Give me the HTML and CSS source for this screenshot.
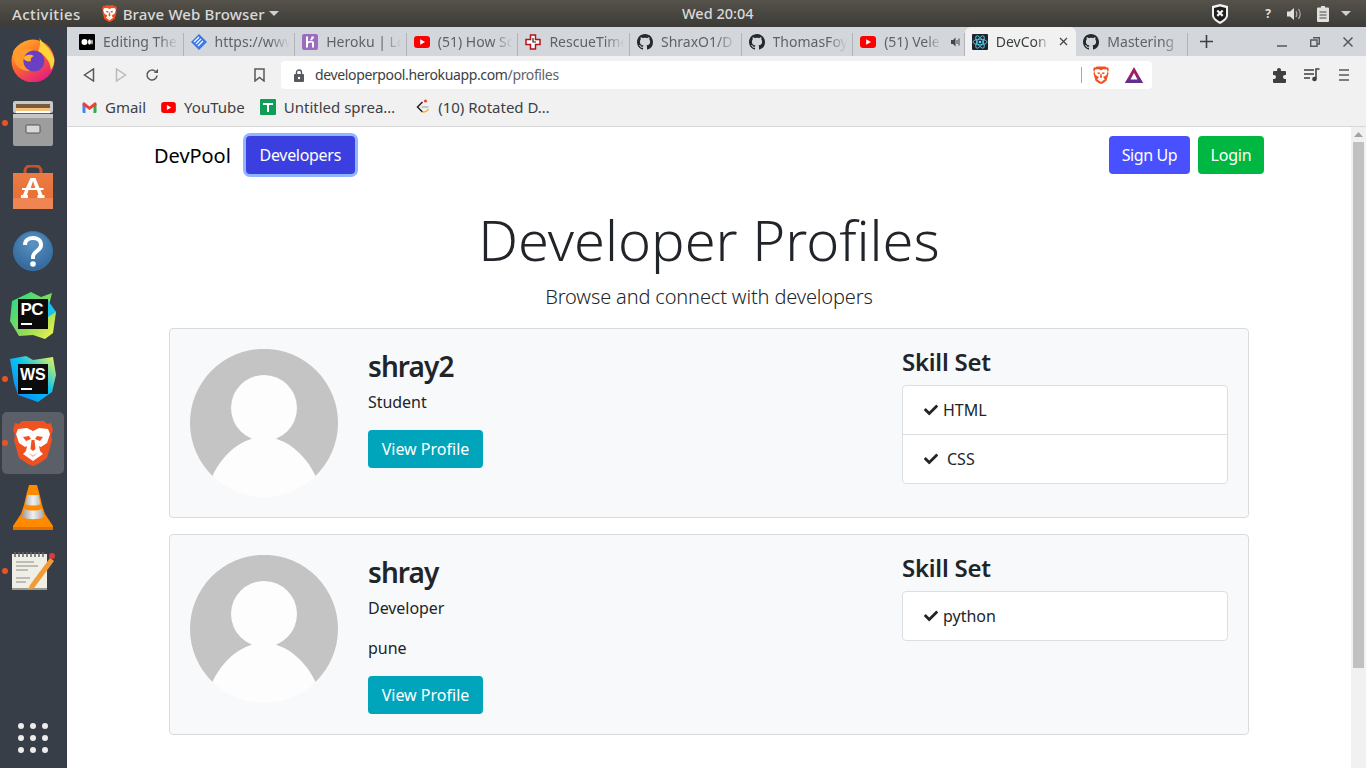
FILE: index.html
```html
<!DOCTYPE html>
<html lang="en">
<head>
<meta charset="utf-8">
<title>DevPool</title>
<link rel="stylesheet" href="styles.css">
</head>
<body>
<svg class="defs" width="0" height="0" aria-hidden="true">
  <defs>
    <symbol id="gh" viewBox="0 0 16 16"><path fill="#24292e" d="M8 0C3.58 0 0 3.58 0 8c0 3.54 2.29 6.53 5.47 7.59.4.07.55-.17.55-.38 0-.19-.01-.82-.01-1.49-2.01.37-2.53-.49-2.69-.94-.09-.23-.48-.94-.82-1.13-.28-.15-.68-.52-.01-.53.63-.01 1.08.58 1.23.82.72 1.21 1.87.87 2.33.66.07-.52.28-.87.51-1.07-1.78-.2-3.64-.89-3.64-3.95 0-.87.31-1.59.82-2.15-.08-.2-.36-1.02.08-2.12 0 0 .67-.21 2.2.82.64-.18 1.32-.27 2-.27.68 0 1.36.09 2 .27 1.53-1.04 2.2-.82 2.2-.82.44 1.1.16 1.92.08 2.12.51.56.82 1.27.82 2.15 0 3.07-1.87 3.75-3.65 3.95.29.25.54.73.54 1.48 0 1.07-.01 1.93-.01 2.2 0 .21.15.46.55.38A8.013 8.013 0 0016 8c0-4.42-3.58-8-8-8z"/></symbol>
    <symbol id="yt" viewBox="0 0 16 12"><rect width="16" height="12" rx="3" fill="#f00"/><path fill="#fff" d="M6.2 3.2 11 6l-4.8 2.8z"/></symbol>
    <symbol id="lion" viewBox="0 0 40 46"><path fill="#f1501f" d="M9 1h22l3 3 4-1 2 7-2 5 1 5-5 18-9 6-5 2-5-2-9-6-5-18 1-5-2-5 2-7 4 1z"/><path fill="#fff" d="M5 9l9-1 6 3 6-3 9 1 2 5-3 9-6 4-2-1 1 5 3 3-10 7-10-7 3-3 1-5-2 1-6-4-3-9z"/><path fill="#f1501f" d="M10 17l6-1 2 3-5 2zM30 17l-6-1-2 3 5 2zM18.500 20h3l1 9-2.500 2-2.500-2z"/><path fill="#f1501f" d="M15 33l5 2 5-2-5 4z" opacity=".4"/></symbol>
    <symbol id="check" viewBox="0 0 512 512"><path fill="#212529" d="M173.898 439.404l-166.4-166.4c-9.997-9.997-9.997-26.206 0-36.204l36.203-36.204c9.997-9.998 26.207-9.998 36.204 0L192 312.69 432.095 72.596c9.997-9.997 26.207-9.997 36.204 0l36.203 36.204c9.997 9.997 9.997 26.206 0 36.204l-294.4 294.401c-9.998 9.997-26.207 9.997-36.204-.001z"/></symbol>
    <symbol id="avatar" viewBox="0 0 148 148"><circle cx="74" cy="74" r="74" fill="#fdfdfd"/><path fill="#c4c4c4" d="M22.500 127A74 74 0 1 1 125.500 127C116 106 96 88 74 88S32 106 22.500 127z"/><circle cx="74" cy="59" r="33" fill="#fdfdfd"/></symbol>
    <linearGradient id="pcg" x1="0" y1="0" x2="1" y2="1"><stop offset="0" stop-color="#1ddb8b"/><stop offset=".55" stop-color="#8cd85a"/><stop offset="1" stop-color="#fcf84a"/></linearGradient>
    <linearGradient id="wsg" x1="0" y1="1" x2="1" y2="0"><stop offset="0" stop-color="#087cfa"/><stop offset=".55" stop-color="#07c3f2"/><stop offset="1" stop-color="#fcf84a"/></linearGradient>
    <linearGradient id="ffg" x1="0" y1="0" x2=".6" y2="1"><stop offset="0" stop-color="#ffc22b"/><stop offset=".5" stop-color="#ff6a2b"/><stop offset="1" stop-color="#e5217a"/></linearGradient>
    <linearGradient id="bagg" x1="0" y1="0" x2="0" y2="1"><stop offset="0" stop-color="#ea7c45"/><stop offset="1" stop-color="#e96b2e"/></linearGradient>
    <linearGradient id="stripeg" x1="0" y1="0" x2="1" y2="0"><stop offset="0" stop-color="#9a9a9a"/><stop offset=".5" stop-color="#f0f0f0"/><stop offset="1" stop-color="#a8a8a8"/></linearGradient>
    <radialGradient id="helpg" cx=".5" cy=".3" r=".75"><stop offset="0" stop-color="#5a93c4"/><stop offset="1" stop-color="#2f6497"/></radialGradient>
  </defs>
</svg>

<header class="topbar">
  <span class="top-item activities">Activities</span>
  <span class="top-item appmenu">
    <svg class="top-lion" width="15" height="17"><use href="#lion"/></svg>
    Brave Web Browser
    <svg class="caret" width="10" height="5" viewBox="0 0 10 5"><path fill="#cfcfcf" d="M0 0h10L5 5z"/></svg>
  </span>
  <span class="clock">Wed 20:04</span>
  <span class="tray">
    <svg width="18" height="20" viewBox="0 0 18 20"><path fill="#f2f2f2" d="M1 2l8-2 8 2v9c0 4-4 7-8 9-4-2-8-5-8-9z"/><path fill="#1d1d1d" d="M3 4l6-1.500L15 4v7c0 3-3 5-6 6.500C6 16 3 14 3 11z"/><path d="M6.300 6.500l5.400 5.400M11.700 6.500l-5.400 5.400" stroke="#f2f2f2" stroke-width="2.200"/></svg>
    <span class="tray-q">?</span>
    <svg width="16" height="16" viewBox="0 0 16 16"><path fill="#e0e0e0" d="M1 5.500h3L8 2v12l-4-3.500H1z"/><path d="M10 5c1 1.800 1 4.200 0 6M12.500 3c2 3 2 7 0 10" fill="none" stroke="#a8a8a8" stroke-width="1.300"/></svg>
    <svg width="12" height="16" viewBox="0 0 12 16"><path fill="#e0e0e0" d="M4 0h4v1.500h3a1 1 0 0 1 1 1V15a1 1 0 0 1-1 1H1a1 1 0 0 1-1-1V2.500a1 1 0 0 1 1-1h3z"/><path d="M2.500 6h7M2.500 9h7M2.500 12h7" stroke="#4a4843" stroke-width="1.200"/></svg>
    <svg class="tray-caret" width="10" height="5" viewBox="0 0 10 5"><path fill="#cfcfcf" d="M0 0h10L5 5z"/></svg>
  </span>
</header>

<div class="desktop">
  <nav class="dock">
    <div class="dock-item">
      <svg width="46" height="46" viewBox="0 0 46 46"><circle cx="23" cy="25" r="21.500" fill="url(#ffg)"/><path fill="#ffd53a" d="M29 1c2 6 12 10 15 21 1 4-1 9-3 12-1-9-6-15-13-19C30 11 31 6 29 1z"/><path fill="#ff9a2b" d="M3 16c2-4 5-7 8-7-1 3 0 4 1 5 3-2 8-2 11 0-5 1-10 5-10 11 0 5 4 9 10 9-8 3-17-2-19-10-1-3-1-6-1-8z"/><circle cx="24" cy="25" r="10.500" fill="#6a3fc4"/><path fill="#ffb02e" d="M13 22c3-4 8-4 11-2-3 1-4 3-3 5-3 1-6 0-8-3z"/></svg>
    </div>
    <div class="dock-item running">
      <svg width="42" height="46" viewBox="0 0 42 46"><rect x="1" y="1" width="40" height="12" rx="2" fill="#c9c9c9"/><rect x="4" y="4" width="34" height="11" fill="#7a5a3a"/><rect x="4" y="8" width="34" height="3" fill="#f6c27c"/><rect x="4" y="11" width="34" height="2" fill="#fff"/><rect x="1" y="14" width="40" height="32" rx="2" fill="#9d9d9d"/><rect x="1" y="14" width="40" height="4" fill="#c6c6c6"/><rect x="14" y="25" width="14" height="8" rx="1" fill="#d9d9d9" stroke="#555"/></svg>
    </div>
    <div class="dock-item">
      <svg width="42" height="44" viewBox="0 0 42 44"><path d="M13 10V6a5 5 0 0 1 5-5h6a5 5 0 0 1 5 5v4" fill="none" stroke="#c0562a" stroke-width="3"/><path fill="url(#bagg)" d="M1 8h40v35a1 1 0 0 1-1 1H2a1 1 0 0 1-1-1z"/><rect x="1" y="33" width="40" height="11" fill="#ee8553"/><path fill="#fff" d="M18.500 13h5l4 10h4v2h-3l2 5h2v3h-7v-3h1l-1.500-5h-8.500l-1.500 5h1v3H9v-3h2l2-5h-3v-2h4zM21 16l-2.300 7h4.600z"/></svg>
    </div>
    <div class="dock-item">
      <svg width="40" height="40" viewBox="0 0 40 40"><circle cx="20" cy="20" r="19.500" fill="url(#helpg)" stroke="#3a72a8"/><path fill="none" stroke="#fff" stroke-width="4" d="M12 14c0-5 4-7 8-7s8 2 8 7c0 6-8 6-8 12v2"/><circle cx="20" cy="33" r="2.800" fill="#fff"/></svg>
    </div>
    <div class="dock-item">
      <svg width="48" height="48" viewBox="0 0 48 48"><path fill="url(#pcg)" d="M3 10 22 1l10 5 11-4-3 12 7 7-3 21-8 6-12-4-14 1L1 30z"/><path fill="#19c2e8" d="M38 8l9 13-8 5z"/><rect x="9" y="8" width="30" height="30" fill="#0b0b0b"/><text class="ide ide-pc" x="11.500" y="24">PC</text><rect x="12" y="32" width="11" height="2" fill="#fff"/></svg>
    </div>
    <div class="dock-item running">
      <svg width="48" height="48" viewBox="0 0 48 48"><path fill="url(#wsg)" d="M1 4l16-3 7 4 20-3 3 18-4 17-14 10-20-7L5 28z"/><rect x="9" y="9" width="30" height="30" fill="#0b0b0b"/><text class="ide" x="11" y="25">WS</text><rect x="12" y="33" width="11" height="2" fill="#fff"/></svg>
    </div>
    <div class="dock-item active running">
      <svg width="40" height="46"><use href="#lion"/></svg>
    </div>
    <div class="dock-item">
      <svg width="42" height="46" viewBox="0 0 42 46"><path fill="#ff8a00" d="M17 1h8l3 11 2 9 3 9 8 12v3a1 1 0 0 1-1 1H2a1 1 0 0 1-1-1v-3l8-12 3-9 2-9z"/><path fill="url(#stripeg)" d="M15.500 11h11l2 9c-3 2-12 2-15 0zM12 25c5 2 13 2 18 0l2 8c-5 3-17 3-22 0z"/><path fill="#e26f00" d="M1 43h40v3H1z"/></svg>
    </div>
    <div class="dock-item running">
      <svg width="46" height="40" viewBox="0 0 46 40"><rect x="2" y="3" width="35" height="36" fill="#efefe6"/><rect x="2" y="37" width="35" height="2" fill="#9a9a90"/><path d="M5 1v5M9 1v5M13 1v5M17 1v5M21 1v5M25 1v5M29 1v5M33 1v5" stroke="#666" stroke-width="1.500"/><path d="M6 11h18M6 15h22M6 19h12M6 27h14M6 31h10" stroke="#8a8a8a"/><path d="M20 34 40 7l4 3-20 27-6 2z" fill="#f29b36"/><circle cx="42" cy="5" r="3" fill="#e03a3a"/></svg>
    </div>
    <div class="dock-spacer"></div>
    <div class="dock-grid">
      <i></i><i></i><i></i><i></i><i></i><i></i><i></i><i></i><i></i>
    </div>
  </nav>

  <main class="browser">
    <div class="tabstrip">
      <div class="tab"><svg width="16" height="16" viewBox="0 0 16 16"><rect width="16" height="16" rx="1" fill="#000"/><circle cx="5.500" cy="8" r="3" fill="#fff"/><ellipse cx="10.500" cy="8" rx="1.500" ry="2.800" fill="#fff"/><ellipse cx="13" cy="8" rx=".7" ry="2.500" fill="#fff"/></svg><span class="tab-title">Editing The</span></div>
      <div class="tab"><svg width="16" height="16" viewBox="0 0 16 16"><path fill="#3b78e7" d="M8 0l8 8-8 8-8-8z"/><path d="M3 8l5-5M5 10l5-5M7 12l5-5" stroke="#fff" stroke-width="1.200"/></svg><span class="tab-title">https://www</span></div>
      <div class="tab"><svg width="16" height="16" viewBox="0 0 16 16"><rect width="16" height="16" rx="2" fill="#9a6dbf"/><path fill="#fff" d="M4 2.500h2v5c1.500-1 5.500-1.500 6 1v5h-2V9c0-1-2-.5-4 .5v4H4zM9.500 2.500h2.500c0 1.500-1 2.500-2 3.500H8c.8-1 1.500-2.300 1.500-3.500z"/></svg><span class="tab-title">Heroku | Lo</span></div>
      <div class="tab"><svg width="16" height="12"><use href="#yt"/></svg><span class="tab-title">(51) How So</span></div>
      <div class="tab"><svg width="16" height="16" viewBox="0 0 16 16"><path fill="#fff" stroke="#b3131b" stroke-width="1.500" d="M5.500 1h5v4.500H15v5h-4.500V15h-5v-4.500H1v-5h4.500z"/><path d="M8 4v4h3" fill="none" stroke="#222" stroke-width="1.200"/></svg><span class="tab-title">RescueTime</span></div>
      <div class="tab"><svg width="16" height="16"><use href="#gh"/></svg><span class="tab-title">ShraxO1/D</span></div>
      <div class="tab"><svg width="16" height="16"><use href="#gh"/></svg><span class="tab-title">ThomasFoy</span></div>
      <div class="tab tab-audio"><svg width="16" height="12"><use href="#yt"/></svg><span class="tab-title">(51) Vele</span><svg class="speaker" width="10" height="10" viewBox="0 0 10 10"><path fill="#444" d="M0 3h2l2.500-2.500v9L2 7H0z"/><path d="M6 3v4M8 1.500v7" stroke="#444"/></svg></div>
      <div class="tab active"><svg width="16" height="16" viewBox="0 0 16 16"><rect width="16" height="16" rx="1" fill="#20232a"/><g fill="none" stroke="#61dafb" stroke-width=".8"><ellipse cx="8" cy="8" rx="7" ry="2.800"/><ellipse cx="8" cy="8" rx="7" ry="2.800" transform="rotate(60 8 8)"/><ellipse cx="8" cy="8" rx="7" ry="2.800" transform="rotate(120 8 8)"/></g><circle cx="8" cy="8" r="1.300" fill="#61dafb"/></svg><span class="tab-title">DevCon</span><svg class="tab-x" width="9" height="9" viewBox="0 0 9 9"><path d="M1 1l7 7M8 1L1 8" stroke="#45484c" stroke-width="1.300"/></svg></div>
      <div class="tab"><svg width="16" height="16"><use href="#gh"/></svg><span class="tab-title">Mastering</span></div>
      <svg class="new-tab" width="13" height="13" viewBox="0 0 13 13"><path d="M6.500 0v13M0 6.500h13" stroke="#3c4043" stroke-width="1.600"/></svg>
      <div class="win-ctrls">
        <svg width="10" height="10" viewBox="0 0 10 10"><path d="M0 9h10" stroke="#55585c" stroke-width="1.500"/></svg>
        <svg width="10" height="10" viewBox="0 0 10 10"><path d="M3 .7h6.300V7H7M.7 3H7v6.300H.7z" fill="none" stroke="#55585c" stroke-width="1.400"/></svg>
        <svg width="10" height="10" viewBox="0 0 10 10"><path d="M.5.500l9 9M9.500.500l-9 9" stroke="#55585c" stroke-width="1.500"/></svg>
      </div>
    </div>

    <div class="toolbar">
      <button class="tb-btn back" aria-label="Back"><svg width="12" height="14" viewBox="0 0 12 14"><path d="M10.500 1v12L1.500 7z" fill="none" stroke="#55585c" stroke-width="1.500"/></svg></button>
      <button class="tb-btn fwd" aria-label="Forward"><svg width="12" height="14" viewBox="0 0 12 14"><path d="M1.500 1v12l9-6z" fill="none" stroke="#b9bbbe" stroke-width="1.500"/></svg></button>
      <button class="tb-btn reload" aria-label="Reload"><svg width="14" height="14" viewBox="0 0 14 14"><path d="M12 7.500a5 5 0 1 1-1.500-4" fill="none" stroke="#55585c" stroke-width="1.500"/><path fill="#55585c" d="M13 .8V5H8.800z"/></svg></button>
      <button class="tb-btn mark" aria-label="Bookmark"><svg width="11" height="14" viewBox="0 0 11 14"><path d="M1 1h9v12L5.500 9.500 1 13z" fill="none" stroke="#55585c" stroke-width="1.500"/></svg></button>
      <div class="omnibox">
        <svg class="lock" width="10" height="13" viewBox="0 0 10 13"><path d="M2.500 6V3.500a2.500 2.500 0 0 1 5 0V6" fill="none" stroke="#55585c" stroke-width="1.400"/><rect y="5" width="10" height="8" rx="1" fill="#55585c"/><circle cx="5" cy="9" r="1.200" fill="#fff"/></svg>
        <span class="url"><span class="url-host">developerpool.herokuapp.com</span>/profiles</span>
        <span class="omni-sep"></span>
        <svg width="16" height="18"><use href="#lion"/></svg>
        <svg class="bat" width="18" height="16" viewBox="0 0 18 16"><path fill="#9e1f63" d="M9 0l9 16H0z"/><path fill="#662d91" d="M0 16h18l-3-5H3z"/><path fill="#ff5000" d="M9 0 0 16l3-5z"/><path fill="#fff" d="M9 6l3.500 6.500h-7z"/></svg>
      </div>
      <div class="ext-btns">
        <svg width="15" height="15" viewBox="0 0 15 15"><path fill="#3c4043" d="M6 0a2 2 0 0 1 2 2v1h4a1 1 0 0 1 1 1v3h-1a2 2 0 0 0 0 4h1v3a1 1 0 0 1-1 1H1a1 1 0 0 1-1-1v-3h1a2 2 0 0 0 0-4H0V4a1 1 0 0 1 1-1h3V2a2 2 0 0 1 2-2z"/></svg>
        <svg width="16" height="14" viewBox="0 0 16 14"><path d="M0 2h10M0 6h10M0 10h6" stroke="#3c4043" stroke-width="1.500"/><path d="M12 10.500V1h3.500" fill="none" stroke="#3c4043" stroke-width="1.500"/><circle cx="10.500" cy="11" r="2.300" fill="#3c4043"/></svg>
        <svg class="menu-icon" width="10" height="12" viewBox="0 0 10 12"><path d="M0 1h10M0 6h10M0 11h10" stroke="#55585c" stroke-width="1.500"/></svg>
      </div>
    </div>

    <div class="bookmarks">
      <span class="bm"><svg width="15" height="11" viewBox="0 0 14 11"><path fill="#4285f4" d="M0 2v8a1 1 0 0 0 1 1h2V4z"/><path fill="#34a853" d="M14 2v8a1 1 0 0 1-1 1h-2V4z"/><path fill="#ea4335" d="M0 1.500A1.300 1.300 0 0 1 2 .5L7 4.500 12 .5a1.300 1.300 0 0 1 2 1V3L7 8 0 3z"/></svg>Gmail</span>
      <span class="bm"><svg width="15" height="11"><use href="#yt"/></svg>YouTube</span>
      <span class="bm"><svg width="16" height="16" viewBox="0 0 16 16"><rect width="16" height="16" rx="1" fill="#0f9d58"/><path d="M3 5h10M8 5v8" stroke="#fff" stroke-width="2"/></svg>Untitled sprea…</span>
      <span class="bm bm-last"><svg width="15" height="16" viewBox="0 0 14 16"><path d="M7 3 2 8l5 5" fill="none" stroke="#222" stroke-width="1.500"/><path d="M6 8h7" stroke="#999"/><path d="M7 13c3 0 5-1 6-3" fill="none" stroke="#f5b400" stroke-width="1.500"/><circle cx="10" cy="2" r="1.600" fill="#e8453c"/></svg>(10) Rotated D…</span>
    </div>

    <div class="viewport">
      <div class="page">
        <div class="navbar">
          <a class="brand">DevPool</a>
          <a class="btn btn-dev">Developers</a>
          <span class="nav-fill"></span>
          <a class="btn btn-signup">Sign Up</a>
          <a class="btn btn-login">Login</a>
        </div>
        <h1 class="title">Developer Profiles</h1>
        <p class="lead">Browse and connect with developers</p>

        <section class="card">
          <svg class="avatar" width="148" height="148"><use href="#avatar"/></svg>
          <div class="info">
            <h2 class="name">shray2</h2>
            <p class="meta">Student</p>
            <a class="btn btn-view">View Profile</a>
          </div>
          <div class="skills">
            <h3 class="skills-title">Skill Set</h3>
            <ul class="skill-list">
              <li class="skill"><svg class="tick" width="14" height="14"><use href="#check"/></svg>HTML</li>
              <li class="skill skill-wide"><svg class="tick" width="14" height="14"><use href="#check"/></svg>CSS</li>
            </ul>
          </div>
        </section>

        <section class="card">
          <svg class="avatar" width="148" height="148"><use href="#avatar"/></svg>
          <div class="info">
            <h2 class="name">shray</h2>
            <p class="meta">Developer</p>
            <p class="meta">pune</p>
            <a class="btn btn-view">View Profile</a>
          </div>
          <div class="skills">
            <h3 class="skills-title">Skill Set</h3>
            <ul class="skill-list">
              <li class="skill"><svg class="tick" width="14" height="14"><use href="#check"/></svg>python</li>
            </ul>
          </div>
        </section>
      </div>
      <div class="scrollbar">
        <svg class="sb-up" width="9" height="5" viewBox="0 0 9 5"><path fill="#a3a3a3" d="M4.500 0 9 5H0z"/></svg>
        <div class="sb-thumb"></div>
      </div>
    </div>
  </main>
</div>
</body>
</html>
```
FILE: styles.css
```css
* { box-sizing: border-box; }
html, body { margin: 0; height: 100%; overflow: hidden; }
body {
  width: 1366px;
  height: 768px;
  display: flex;
  flex-direction: column;
  font-family: "Noto Sans", "Open Sans", sans-serif;
  color: #212529;
  background: #fff;
}
.defs { position: absolute; }

/* top bar */
.topbar {
  height: 27px;
  flex: none;
  display: flex;
  align-items: center;
  position: relative;
  background: linear-gradient(#55524b, #3c3b37);
  color: #d9d9d9;
  font-size: 15px;
  font-weight: 500;
}
.top-item { display: flex; align-items: center; }
.activities { margin-left: 12px; letter-spacing: .4px; }
.appmenu { margin-left: 21px; gap: 6px; letter-spacing: .15px; }
.caret { margin-left: -2px; }
.clock { position: absolute; left: 682px; top: 3px; font-size: 14.5px; }
.tray { margin-left: auto; margin-right: 15px; display: flex; align-items: center; gap: 15px; }
.tray-q { font-size: 12px; font-weight: 700; margin-left: 21px; color: #e0e0e0; }
.tray-caret { margin-left: -3px; }

.desktop { flex: 1; display: flex; min-height: 0; }

/* dock */
.dock {
  width: 67px;
  flex: none;
  display: flex;
  flex-direction: column;
  align-items: center;
  background: #383e47;
  padding: 0 1px 15px 0;
}
.dock-item {
  width: 62px;
  height: 64px;
  flex: none;
  display: flex;
  align-items: center;
  justify-content: center;
  position: relative;
}
.dock-item.active { background: #5b6068; border-radius: 5px; height: 62px; margin: 1px 0; }
.dock-item.running::before {
  content: "";
  position: absolute;
  left: 0;
  top: calc(50% - 3px);
  width: 6px;
  height: 6px;
  border-radius: 50%;
  background: #e95420;
}
.dock-spacer { flex: 1; }
.dock-grid { display: grid; grid-template-columns: repeat(3, 6px); gap: 6px; }
.dock-grid i { width: 6px; height: 6px; border-radius: 50%; background: #ececec; }
.ide { font-family: "Liberation Sans", sans-serif; font-weight: 700; font-size: 16px; fill: #fff; }
.ide-pc { font-size: 17px; letter-spacing: -0.5px; }

/* browser chrome */
.browser { flex: 1; min-width: 0; display: flex; flex-direction: column; }
.tabstrip {
  height: 29px;
  flex: none;
  display: flex;
  align-items: flex-end;
  background: #d3d7db;
  padding-left: 5px;
}
.tab {
  width: 111.6px;
  height: 29px;
  flex: none;
  display: flex;
  align-items: center;
  gap: 8px;
  padding: 0 4px 0 7px;
  font-size: 14px;
  color: #5f6368;
  position: relative;
}
.tab::after {
  content: "";
  position: absolute;
  right: 0;
  top: 6px;
  bottom: 0;
  width: 1px;
  background: #b0b4b8;
}
.tab.active {
  background: #f1f1f1;
  border-radius: 6px 6px 0 0;
  color: #3c4043;
}
.tab.active::after { display: none; }
.tab svg { flex: none; }
.tab-title {
  flex: 1;
  min-width: 0;
  white-space: nowrap;
  overflow: hidden;
  -webkit-mask-image: linear-gradient(90deg, #000 72%, transparent 98%);
  mask-image: linear-gradient(90deg, #000 72%, transparent 98%);
}
.tab-x { margin-right: 4px; }
.new-tab { margin: 0 0 8px 12px; }
.win-ctrls { margin: 0 0 9px auto; padding-right: 13px; display: flex; gap: 23px; }

.toolbar {
  height: 34px;
  flex: none;
  background: #f1f1f1;
  display: flex;
  align-items: center;
  padding-top: 4px;
}
.tb-btn { border: 0; background: none; padding: 0; display: flex; }
.back { margin-left: 16px; }
.fwd { margin-left: 20px; }
.reload { margin-left: 18px; }
.mark { margin-left: 95px; }
.omnibox {
  margin-left: 16px;
  width: 871px;
  height: 28px;
  background: #fff;
  border-radius: 4px;
  display: flex;
  align-items: center;
  padding-left: 13px;
  font-size: 14px;
  color: #5f6368;
}
.lock { margin-right: 11px; }
.url { flex: 1; letter-spacing: -0.36px; padding-bottom: 2px; }
.url-host { color: #3c4043; }
.omni-sep { width: 1px; height: 16px; background: #a8a8a8; margin-right: 11px; }
.bat { margin: 0 9px 0 16px; }
.ext-btns { margin-left: 121px; display: flex; align-items: center; gap: 16px; }
.menu-icon { margin-left: 3px; }

.bookmarks {
  height: 37px;
  flex: none;
  background: #f1f1f1;
  border-bottom: 1px solid #d8d8d8;
  display: flex;
  align-items: center;
  padding: 0 0 2px 15px;
  gap: 15px;
  font-size: 15px;
  color: #3c4043;
}
.bm { display: flex; align-items: center; gap: 8px; }
.bm-last { margin-left: 5px; }

/* page */
.viewport { flex: 1; display: flex; min-height: 0; }
.page { flex: 1; min-width: 0; padding: 9px 102px 0; background: #fff; }
.navbar { display: flex; align-items: center; margin: 0 -15px; }
.brand { font-size: 20px; color: #000; margin-right: 15px; letter-spacing: -0.05px; }
.nav-fill { flex: 1; }
.btn {
  display: inline-block;
  height: 38px;
  line-height: 38px;
  text-align: center;
  font-size: 16px;
  color: #fff;
  border-radius: 4px;
}
.btn-dev {
  width: 109px;
  background: #3b3fdf;
  box-shadow: 0 0 0 3px #8fb6ff;
  letter-spacing: -0.3px;
}
.btn-signup { width: 81px; background: #4950ff; margin-right: 8px; letter-spacing: -0.4px; }
.btn-login { width: 66px; background: #00b841; letter-spacing: -0.2px; }
.btn-view { width: 115px; background: #00a5bb; }
.title {
  margin: 32px 0 0;
  text-align: center;
  font-size: 56px;
  line-height: 67px;
  font-weight: 300;
}
.lead {
  margin: 9px 0 16px;
  text-align: center;
  font-size: 20px;
  line-height: 30px;
  font-weight: 300;
  letter-spacing: -0.15px;
}
.card {
  display: flex;
  align-items: flex-start;
  padding: 20px;
  background: #f8f9fa;
  border: 1px solid #d9dcdf;
  border-radius: 4px;
  margin-bottom: 16px;
}
.avatar { flex: none; margin-right: 30px; }
.info { flex: 1; min-width: 0; }
.name { margin: 0 0 6px; font-size: 28px; line-height: 35px; font-weight: 600; letter-spacing: -0.9px; }
.meta { margin: 0 0 16px; font-size: 16px; line-height: 24px; letter-spacing: -0.05px; }
.skills { width: 326px; flex: none; }
.skills-title { margin: 0 0 11px; font-size: 24px; line-height: 25px; font-weight: 600; letter-spacing: -0.25px; }
.skill-list {
  list-style: none;
  margin: 0;
  padding: 0;
  background: #fff;
  border: 1px solid #dcdfe2;
  border-radius: 4px;
}
.skill {
  height: 48px;
  padding: 0 21px;
  display: flex;
  align-items: center;
  font-size: 16px;
  gap: 5px;
}
.skill + .skill { height: 49px; border-top: 1px solid #dcdfe2; }
.skill-wide { gap: 9px; }

.scrollbar {
  width: 15px;
  flex: none;
  background: #f1f1f1;
  display: flex;
  flex-direction: column;
  align-items: center;
  padding-top: 5px;
}
.sb-thumb { width: 11px; height: 526px; margin-top: 5px; background: #c1c1c1; }
```
